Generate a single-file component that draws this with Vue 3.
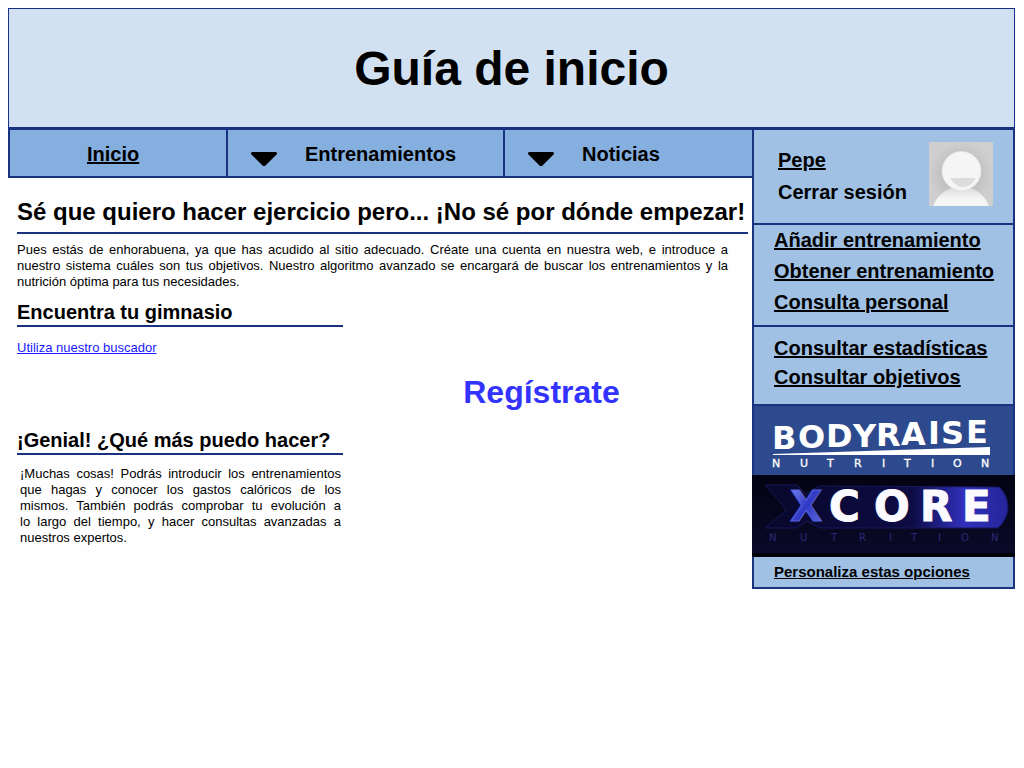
<script setup>
const trainingLinks = ['Añadir entrenamiento', 'Obtener entrenamiento', 'Consulta personal']
const statsLinks = ['Consultar estadísticas', 'Consultar objetivos']
const menus = ['Entrenamientos', 'Noticias']
</script>

<template>
  <div class="page">
    <header class="banner">
      <h1>Guía de inicio</h1>
    </header>

    <div class="layout">
      <div class="content">
        <nav class="nav">
          <div class="cell home"><a href="#">Inicio</a></div>
          <div v-for="menu in menus" :key="menu" class="cell">
            <button type="button" class="menu">
              <svg class="arrow" viewBox="0 0 26 14" aria-hidden="true">
                <path d="M1 0H25L26 1V2L14 14H12L0 2V1Z" />
              </svg>
              <span>{{ menu }}</span>
            </button>
          </div>
        </nav>

        <main class="main">
          <h2>Sé que quiero hacer ejercicio pero... ¡No sé por dónde empezar!</h2>
          <p class="intro">
            Pues estás de enhorabuena, ya que has acudido al sitio adecuado. Créate una cuenta en nuestra web, e introduce a nuestro sistema cuáles son tus objetivos. Nuestro algoritmo avanzado se encargará de buscar los entrenamientos y la nutrición óptima para tus necesidades.
          </p>

          <div class="columns">
            <div>
              <section class="gym">
                <h3>Encuentra tu gimnasio</h3>
                <a href="#" class="finder">Utiliza nuestro buscador</a>
              </section>
              <section>
                <h3>¡Genial! ¿Qué más puedo hacer?</h3>
                <p class="more">
                  ¡Muchas cosas! Podrás introducir los entrenamientos que hagas y conocer los gastos calóricos de los mismos. También podrás comprobar tu evolución a lo&nbsp;largo del tiempo, y hacer consultas avanzadas a nuestros expertos.
                </p>
              </section>
            </div>
            <div class="join"><a href="#">Regístrate</a></div>
          </div>
        </main>
      </div>

      <aside class="sidebar">
        <section class="panel user">
          <div class="account">
            <a href="#">Pepe</a>
            <button type="button">Cerrar sesión</button>
          </div>
          <svg class="avatar" viewBox="0 0 64 64" role="img" aria-label="Avatar">
            <defs>
              <radialGradient id="avatar-bg">
                <stop offset="0.6" stop-color="#c2c2c2" />
                <stop offset="1" stop-color="#cfcfcf" />
              </radialGradient>
              <linearGradient id="avatar-body" x1="0" y1="0" x2="0" y2="1">
                <stop offset="0.1" stop-color="#dedede" />
                <stop offset="0.6" stop-color="#f5f5f5" />
              </linearGradient>
            </defs>
            <rect width="64" height="64" fill="url(#avatar-bg)" />
            <path d="M4 64C9 52 18 45 32 45S55 52 60 64Z" fill="url(#avatar-body)" />
            <circle cx="32.500" cy="29" r="19.500" fill="#f5f5f5" stroke="#e6e6e6" stroke-width="0.600" />
            <path d="M21 36H47C43 42 39 45 34 45S25 42 21 36Z" fill="#dcdcdc" />
          </svg>
        </section>

        <section class="panel training">
          <a v-for="link in trainingLinks" :key="link" href="#">{{ link }}</a>
        </section>

        <section class="panel stats">
          <a v-for="link in statsLinks" :key="link" href="#">{{ link }}</a>
        </section>

        <a href="#" class="sponsor body-raise" aria-label="Bodyraise Nutrition">
          <svg viewBox="0 0 259 69">
            <rect width="259" height="69" fill="#2e4a8e" />
            <g fill="#fff" font-family="DejaVu Sans">
              <text
                x="18 44 72 99 122 147 174 187 212"
                y="43 42 41 41 40 39 38 38 37"
                font-size="32"
                font-weight="bold"
              >BODYRAISE</text>
              <path d="M19 48L236 41V49H19Z" />
              <text
                x="18 46 73 100 128 150 177 199 227"
                y="61"
                font-size="11"
                font-weight="normal"
                stroke="#fff"
                stroke-width="0.300"
              >NUTRITION</text>
            </g>
          </svg>
        </a>

        <a href="#" class="sponsor x-core" aria-label="Xcore Nutrition">
          <svg viewBox="0 0 263 82">
            <defs>
              <linearGradient id="core-bg" x1="0" y1="0" x2="0" y2="1">
                <stop offset="0" stop-color="#030313" />
                <stop offset="1" stop-color="#0a0a2a" />
              </linearGradient>
              <linearGradient id="core-plate" x1="0" y1="0" x2="1" y2="0">
                <stop offset="0" stop-color="#08082c" />
                <stop offset="0.600" stop-color="#0d0b43" />
                <stop offset="0.820" stop-color="#3030bd" />
                <stop offset="1" stop-color="#25259a" />
              </linearGradient>
              <linearGradient id="core-x" x1="0" y1="0" x2="1" y2="1">
                <stop offset="0" stop-color="#8290f5" />
                <stop offset="0.500" stop-color="#3038c4" />
                <stop offset="1" stop-color="#6670df" />
              </linearGradient>
            </defs>
            <rect width="263" height="82" fill="url(#core-bg)" />
            <rect y="78" width="263" height="4" fill="#01010a" />
            <path
              d="M13 10H45L54 19L67 11L247 12Q256 20 256 32T246 53H68L55 46L44 53H13L34 36L30 29Z"
              fill="url(#core-plate)"
              stroke="#17175a"
            />
            <g font-family="DejaVu Sans" font-weight="bold">
              <text x="38" y="46" font-size="42" fill="url(#core-x)" stroke="#5661dc">X</text>
              <text
                x="77 122 168 210"
                y="46"
                font-size="42"
                fill="#fafaff"
                stroke="#fafaff"
              >CORE</text>
            </g>
            <text
              x="17 48 79 107 137 159 186 209 239"
              y="66"
              font-family="DejaVu Sans"
              font-size="10"
              font-weight="normal"
              fill="#2a2a78"
            >NUTRITION</text>
          </svg>
        </a>

        <div class="panel customize"><a href="#">Personaliza estas opciones</a></div>
      </aside>
    </div>
  </div>
</template>

<style>
body {
  margin: 0;
  background: #fefefe;
}
</style>

<style scoped>
.page {
  --line: #1b3281;
  padding: 8px 9px 8px 8px;
  color: #000;
  font: 13px/16px "Liberation Sans", Arial, sans-serif;
}
h1, h2, h3, p {
  margin: 0;
}
a {
  color: inherit;
}
button {
  padding: 0;
  border: 0;
  background: none;
  color: inherit;
  font: inherit;
  cursor: pointer;
}
.banner {
  padding: 32px 0 30px;
  border: 1px solid var(--line);
  background: #d2e1f2;
  text-align: center;
}
h1 {
  font-size: 48px;
  line-height: 56px;
}
.layout {
  display: grid;
  grid-template-columns: minmax(0, 1fr) 263px;
  align-items: start;
}
.nav {
  display: grid;
  grid-template-columns: 216fr 277fr 249fr;
  border: 2px solid var(--line);
  border-right: 0;
  background: #84afde;
  font-size: 20px;
  font-weight: bold;
}
.cell {
  height: 46px;
  line-height: 48px;
}
.cell + .cell {
  border-left: 2px solid var(--line);
}
.home {
  padding-left: 77px;
}
.menu {
  display: flex;
  align-items: center;
  gap: 28px;
  padding-left: 23px;
}
.arrow {
  width: 26px;
  height: 14px;
  margin-top: 10px;
}
.main {
  padding: 20px 4px 20px 9px;
}
h2 {
  padding-bottom: 6px;
  border-bottom: 2px solid var(--line);
  font-size: 24px;
  line-height: 28px;
}
.intro {
  margin: 8px 20px 11px 0;
  text-align: justify;
}
.columns {
  display: grid;
  grid-template-columns: 326fr 405fr;
}
h3 {
  padding-bottom: 2px;
  border-bottom: 2px solid var(--line);
  font-size: 20px;
  line-height: 22px;
}
.gym {
  min-height: 128px;
}
.finder {
  display: inline-block;
  margin-top: 13px;
  color: #1a1aff;
}
.more {
  margin: 11px 2px 0 3px;
  text-align: justify;
}
.join {
  padding: 73px 8px 0 0;
  text-align: center;
}
.join a {
  color: #3333ff;
  font-size: 32px;
  font-weight: bold;
  line-height: 36px;
  text-decoration: none;
}
.sidebar {
  background: #a0c1e4;
  font-size: 20px;
  font-weight: bold;
}
.sidebar a {
  text-decoration-thickness: 2px;
}
.panel {
  border: 2px solid var(--line);
  border-top: 0;
  padding-left: 20px;
}
.user {
  display: flex;
  justify-content: space-between;
  border-top: 2px solid var(--line);
  padding: 12px 20px 15px 24px;
}
.account {
  display: flex;
  flex-direction: column;
  align-items: flex-start;
  line-height: 32px;
  padding-top: 2px;
}
.avatar {
  width: 64px;
  height: 64px;
}
.training,
.stats {
  display: flex;
  flex-direction: column;
  align-items: flex-start;
}
.training {
  padding-bottom: 7px;
  line-height: 31px;
}
.stats {
  padding-top: 7px;
  padding-bottom: 12px;
  line-height: 29px;
}
.sponsor,
.sponsor svg {
  display: block;
}
.body-raise {
  border: solid var(--line);
  border-width: 0 2px;
}
.sidebar .sponsor {
  text-decoration: none;
}
.customize {
  font-size: 15px;
  line-height: 30px;
}
.customize a {
  text-decoration-thickness: 1px;
}
</style>
